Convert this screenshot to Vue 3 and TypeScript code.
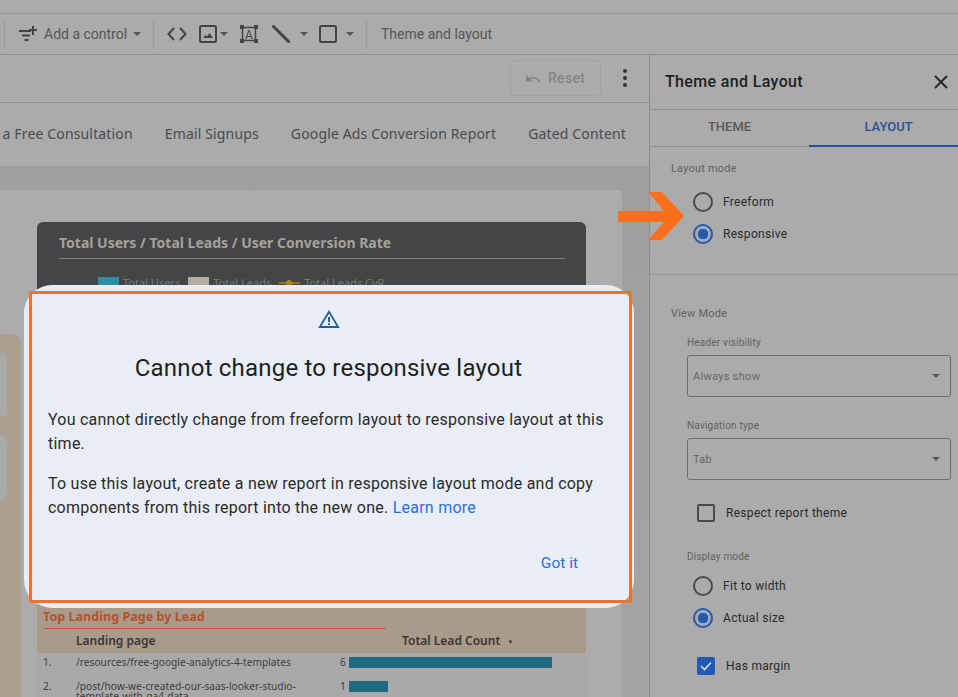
<script setup lang="ts">
const reportTabs = ['Book a Free Consultation', 'Email Signups', 'Google Ads Conversion Report', 'Gated Content']

interface LegendItem {
  label: string
  kind: string
}

const legend: LegendItem[] = [
  { label: 'Total Users', kind: 'teal' },
  { label: 'Total Leads', kind: 'sand' },
  { label: 'Total Leads CvR', kind: 'line' }
]

const rows = [
  { n: '1.', page: '/resources/free-google-analytics-4-templates', count: 6, width: 203 },
  { n: '2.', page: '/post/how-we-created-our-saas-looker-studio-template-with-ga4-data', count: 1, width: 39 }
]
</script>

<template>
  <div class="app">
    <div class="top-strip"></div>

    <div class="toolbar">
      <span class="sep first"></span>
      <svg class="ic add" width="20" height="20" viewBox="0 0 20 20">
        <path d="M1 7h12M4 11.500h8M6.500 16h4M15 2v9M11 6h8" />
      </svg>
      <span class="tool-text control">Add a control</span>
      <span class="caret c1"></span>
      <span class="sep s2"></span>
      <svg class="ic code" width="20" height="16" viewBox="0 0 20 16">
        <path d="M7 2 1.500 8 7 14M13 2l5.500 6L13 14" />
      </svg>
      <svg class="ic image" width="18" height="18" viewBox="0 0 18 18">
        <rect x="1" y="1" width="16" height="16" rx="1.500" />
        <path class="fill" d="M4 13l2.500-3 1.500 1.500L10.500 8 14 13z" />
      </svg>
      <span class="caret c2"></span>
      <svg class="ic textbox" width="18" height="18" viewBox="0 0 18 18">
        <path class="thin" d="M2.500 2.500h13v13h-13z" />
        <path class="corner" d="M0 0h4v4H0zM14 0h4v4h-4zM0 14h4v4H0zM14 14h4v4h-4z" />
        <text x="9" y="13.500" text-anchor="middle">A</text>
      </svg>
      <svg class="ic line" width="18" height="18" viewBox="0 0 18 18">
        <path d="M1.500 1.500l15 15" />
      </svg>
      <span class="caret c3"></span>
      <svg class="ic square" width="18" height="18" viewBox="0 0 18 18">
        <rect x="1" y="1" width="16" height="16" rx="1.500" />
      </svg>
      <span class="caret c4"></span>
      <span class="sep s3"></span>
      <span class="tool-text theme">Theme and layout</span>
    </div>

    <div class="workspace">
      <div class="main">
        <div class="report-head">
          <button class="reset" type="button">
            <svg width="16" height="12" viewBox="0 0 16 12">
              <path d="M15 10.500C13.500 6.500 9 4.500 4.500 6.500" />
              <path class="solid" d="M1 2.500v7h7z" />
            </svg>
            <span>Reset</span>
          </button>
          <span class="kebab"><i></i><i></i><i></i></span>
        </div>

        <div class="report-tabs">
          <span v-for="tab in reportTabs" :key="tab">{{ tab }}</span>
        </div>

        <div class="canvas">
          <div class="report-page">
            <div class="side-col">
              <div class="side-card"></div>
              <div class="side-card"></div>
            </div>
            <div class="content-col">
              <div class="chart-card">
                <div class="chart-title">Total Users / Total Leads / User Conversion Rate</div>
                <div class="legend">
                  <span v-for="item in legend" :key="item.label" class="legend-item">
                    <i :class="item.kind"></i>{{ item.label }}
                  </span>
                </div>
              </div>
              <div class="table-card">
                <div class="table-title"><span>Top Landing Page by Lead</span></div>
                <div class="table-head">
                  <span class="col-page">Landing page</span>
                  <span class="col-count">Total Lead Count <small>▼</small></span>
                </div>
                <div v-for="row in rows" :key="row.n" class="table-row">
                  <span class="row-n">{{ row.n }}</span>
                  <span class="row-page">{{ row.page }}</span>
                  <span class="row-count">{{ row.count }}</span>
                  <span class="row-bar" :style="{ width: row.width + 'px' }"></span>
                </div>
              </div>
            </div>
          </div>
        </div>
      </div>

      <aside class="panel">
        <div class="panel-head">
          <span>Theme and Layout</span>
          <svg width="14" height="14" viewBox="0 0 14 14"><path d="M1 1l12 12M13 1 1 13" /></svg>
        </div>
        <div class="panel-tabs">
          <span class="tab">THEME</span>
          <span class="tab active">LAYOUT</span>
        </div>

        <section class="layout-mode">
          <div class="section-label">Layout mode</div>
          <label class="radio"><i></i>Freeform</label>
          <label class="radio on"><i></i>Responsive</label>
        </section>

        <section class="view-mode">
          <div class="section-label">View Mode</div>
          <div class="sub">
            <div class="field-label">Header visibility</div>
            <div class="select">Always show<span class="caret"></span></div>
            <div class="field-label nav">Navigation type</div>
            <div class="select">Tab<span class="caret"></span></div>
            <label class="check respect"><i></i>Respect report theme</label>
            <div class="field-label display">Display mode</div>
            <label class="radio"><i></i>Fit to width</label>
            <label class="radio on"><i></i>Actual size</label>
            <label class="check on margin">
              <i><svg width="12" height="10" viewBox="0 0 12 10"><path d="M1 5l3.500 3.500L11 1.500" /></svg></i>
              Has margin
            </label>
          </div>
        </section>
      </aside>
    </div>

    <div class="dialog">
      <div class="highlight">
        <svg class="warn" width="22" height="18" viewBox="0 0 22 18">
          <path d="M11 1.800 1.800 17h18.400z" />
          <path class="mark" d="M11 7v5M11 13.300v1.700" />
        </svg>
        <h2>Cannot change to responsive layout</h2>
        <p>You cannot directly change from freeform layout to responsive layout at this time.</p>
        <p>To use this layout, create a new report in responsive layout mode and copy components from this report into the new one. <a>Learn more</a></p>
        <div class="actions"><a>Got it</a></div>
      </div>
    </div>

    <svg class="arrow" width="68" height="50" viewBox="0 0 68 50">
      <path d="M30 0h14l22 24-22 24H30l16-18H0V19h46z" />
    </svg>
  </div>
</template>

<style scoped>
.app {
  position: relative;
  width: 958px;
  height: 697px;
  overflow: hidden;
  background: #ababab;
  color: #444;
  font-family: Roboto, "Liberation Sans", sans-serif;
}

.top-strip {
  height: 13px;
  border-bottom: 1px solid #969696;
}

/* toolbar */
.toolbar {
  display: flex;
  align-items: center;
  height: 40px;
  border-bottom: 1px solid #8f8f8f;
}
.sep {
  width: 1px;
  height: 30px;
  background: #9a9a9a;
}
.sep.first { margin-left: 4px; }
.sep.s2 { margin-left: 12px; }
.sep.s3 { margin-left: 12px; }
.ic {
  flex: none;
  fill: none;
  stroke: #444;
  stroke-width: 2;
}
.ic .fill { fill: #444; stroke: none; }
.ic.add { margin-left: 13px; }
.ic.code { margin-left: 13px; }
.ic.image { margin-left: 12px; }
.ic.textbox { margin-left: 12px; }
.ic.line { margin-left: 14px; }
.ic.line path { stroke-width: 3; stroke-linecap: round; }
.ic.square { margin-left: 11px; }
.ic.textbox .thin { stroke-width: 1.500; }
.ic.textbox .corner { fill: #444; stroke: none; }
.ic.textbox text {
  fill: #444;
  stroke: none;
  font-size: 12px;
  font-family: Roboto, sans-serif;
}
.tool-text {
  font-size: 14px;
  color: #555;
  white-space: nowrap;
}
.tool-text.control { margin-left: 6px; width: 84px; }
.tool-text.theme { margin-left: 14px; }
.caret {
  flex: none;
  width: 0;
  height: 0;
  border-left: 4px solid transparent;
  border-right: 4px solid transparent;
  border-top: 4px solid #555;
}
.caret.c1 { margin-left: 5px; }
.caret.c2 { margin-left: 3px; }
.caret.c3 { margin-left: 10px; }
.caret.c4 { margin-left: 9px; }

/* main area */
.workspace {
  display: flex;
  height: 643px;
}
.main {
  width: 649px;
  flex: none;
}
.report-head {
  display: flex;
  align-items: center;
  justify-content: flex-end;
  height: 48px;
  padding-bottom: 1px;
  box-sizing: border-box;
  border-bottom: 1px solid #8f8f8f;
}
.reset {
  display: flex;
  align-items: center;
  gap: 7px;
  width: 91px;
  height: 36px;
  padding: 0 0 0 14px;
  margin-right: 22px;
  background: #ababab;
  border: 1px solid #a1a1a1;
  border-radius: 4px;
  color: #868686;
  font: 500 14px Roboto, sans-serif;
  letter-spacing: 0.3px;
}
.reset svg { fill: none; stroke: #868686; stroke-width: 1.800; }
.reset .solid { fill: #868686; stroke: none; }
.kebab {
  display: flex;
  flex-direction: column;
  gap: 3px;
  margin-right: 22px;
}
.kebab i {
  width: 4px;
  height: 4px;
  border-radius: 50%;
  background: #333;
}
.report-tabs {
  display: flex;
  justify-content: flex-end;
  align-items: center;
  gap: 32px;
  height: 64px;
  padding-right: 23px;
  padding-bottom: 2px;
  box-sizing: border-box;
  border-bottom: 1px solid #9a9a9a;
  font: 14px "Noto Sans", sans-serif;
  letter-spacing: 0.15px;
  color: #4a4a4a;
  white-space: nowrap;
}
.canvas {
  height: 532px;
  padding-top: 23px;
  box-sizing: border-box;
  background: linear-gradient(#9f9f9f, #a4a4a4);
  overflow: hidden;
}
.report-page {
  display: flex;
  width: 622px;
  height: 507px;
  background: #acacac;
}
.side-col {
  flex: none;
  width: 21px;
  height: 400px;
  margin-top: 144px;
  padding-top: 18px;
  box-sizing: border-box;
  background: #ad9f8f;
  border-top-right-radius: 10px;
}
.side-card {
  width: 7px;
  height: 65px;
  margin-bottom: 18px;
  background: #a9a9a9;
  border-radius: 0 6px 6px 0;
}
.content-col {
  margin: 32px 0 0 16px;
  width: 549px;
}
.chart-card {
  height: 380px;
  padding: 11px 21px 0 22px;
  box-sizing: border-box;
  background: #434546;
  border-radius: 6px 6px 0 0;
}
.chart-title {
  height: 25px;
  border-bottom: 1px solid #7d7d7b;
  font: 700 14px "Noto Sans", sans-serif;
  color: #a5a297;
}
.legend {
  display: flex;
  gap: 8px;
  margin: 16px 0 0 39px;
  font: 11px "Noto Sans", sans-serif;
  color: #77797a;
}
.legend-item {
  display: flex;
  align-items: center;
  gap: 4px;
}
.legend-item i {
  display: block;
  width: 21px;
  height: 12px;
}
.legend-item .teal { background: #2a8fa5; }
.legend-item .sand { background: #b3aca0; }
.legend-item .line {
  position: relative;
  height: 2px;
  background: #9c7415;
}
.legend-item .line::after {
  content: '';
  position: absolute;
  left: 7px;
  top: -2px;
  width: 6px;
  height: 6px;
  border-radius: 50%;
  background: #b0821a;
}
.table-card {
  background: #a9a9a9;
  font-family: "Noto Sans", sans-serif;
}
.table-title {
  height: 41px;
  padding: 6px 201px 0 6px;
  box-sizing: border-box;
  background: #a99b8c;
  font-weight: 700;
  font-size: 12.600px;
  line-height: 17px;
  color: #b8512a;
}
.table-title span {
  display: block;
  margin-left: 1px;
  margin-right: -1px;
  text-indent: -1px;
  padding-bottom: 3px;
  border-bottom: 1px solid #c9582a;
}
.table-head {
  display: flex;
  margin-top: -12px;
  height: 22px;
  padding-bottom: 4px;
  box-sizing: border-box;
  align-items: center;
  background: #a99b8c;
  font-size: 12px;
  font-weight: 600;
  color: #3a3632;
}
.col-page { margin-left: 39px; width: 326px; }
.col-count small { font-size: 6px; margin-left: 4px; vertical-align: 1px; }
.table-row {
  display: flex;
  align-items: flex-start;
  height: 24px;
  padding-top: 1px;
  box-sizing: border-box;
  font-size: 10.200px;
  line-height: 10px;
  color: #3d3d3d;
}
.row-n { margin-left: 6px; width: 33px; padding-top: 3px; }
.row-page { width: 264px; padding: 3px 24px 0 0; box-sizing: border-box; }
.row-count { width: 9px; padding-top: 3px; }
.row-bar {
  height: 11px;
  margin-top: 3px;
  background: #1f6a83;
}

/* theme panel */
.panel {
  flex: 1;
  min-width: 0;
  overflow: hidden;
  border-left: 1px solid #8f8f8f;
  color: #222;
}
.panel-head {
  display: flex;
  justify-content: space-between;
  align-items: center;
  height: 55px;
  padding: 0 10px 2px 15px;
  box-sizing: border-box;
  border-bottom: 1px solid #8f8f8f;
  font-size: 16px;
  font-weight: 500;
  color: #1f1f1f;
  letter-spacing: 0.35px;
}
.panel-head svg { fill: none; stroke: #2a2a2a; stroke-width: 2; margin-top: 2px; }
.panel-tabs {
  display: flex;
  width: 318px;
  height: 37px;
  box-sizing: border-box;
  border-bottom: 1px solid #8f8f8f;
}
.tab {
  flex: 1;
  display: flex;
  align-items: center;
  justify-content: center;
  padding-bottom: 3px;
  font-size: 13px;
  font-weight: 500;
  color: #595959;
}
.tab.active {
  color: #2d4f93;
  box-shadow: 0 1px 0 0 #2450a4, inset 0 -1px 0 0 #2450a4;
}
.layout-mode {
  height: 128px;
  padding: 15px 0 0 21px;
  box-sizing: border-box;
  border-bottom: 1px solid #979797;
}
.section-label {
  font-size: 11px;
  line-height: 14px;
  color: #616161;
  letter-spacing: 0.2px;
}
.radio {
  display: flex;
  align-items: center;
  gap: 10px;
  height: 32px;
  margin-left: 22px;
  font-size: 12px;
  letter-spacing: 0.3px;
  color: #2a2a2a;
}
.layout-mode .section-label { margin-bottom: 10px; }
.radio i {
  display: block;
  flex: none;
  width: 20px;
  height: 20px;
  box-sizing: border-box;
  border: 2px solid #4a4a4a;
  border-radius: 50%;
  background: #ababab;
}
.radio.on i {
  border-color: #2159b5;
  background: radial-gradient(circle, #2159b5 0 5px, #ababab 5.500px);
}
.view-mode {
  padding: 32px 0 0 21px;
}
.sub {
  margin: 16px 7px 0 16px;
}
.sub .radio { margin-left: 6px; }
.field-label {
  font-size: 10px;
  line-height: 12px;
  color: #616161;
  letter-spacing: 0.2px;
}
.field-label.nav { margin-top: 23px; }
.field-label.display { margin-top: 29px; }
.select {
  display: flex;
  align-items: center;
  justify-content: space-between;
  height: 42px;
  margin-top: 6px;
  padding: 0 10px 0 5px;
  box-sizing: border-box;
  border: 1px solid #6d6d6d;
  border-radius: 3px;
  font-size: 11px;
  letter-spacing: 0.3px;
  color: #666;
}
.check {
  display: flex;
  align-items: center;
  gap: 11px;
  margin-left: 10px;
  font-size: 12px;
  letter-spacing: 0.3px;
  color: #2a2a2a;
}
.check i {
  display: flex;
  align-items: center;
  justify-content: center;
  flex: none;
  width: 18px;
  height: 18px;
  box-sizing: border-box;
  border: 2px solid #4a4a4a;
  border-radius: 2px;
}
.check.respect { margin-top: 24px; }
.check.margin { margin-top: 23px; }
.check.on i { background: #2159b5; border-color: #2159b5; }
.check svg { fill: none; stroke: #d9dde3; stroke-width: 1.600; }
.display + .radio { margin-top: 7px; }

/* dialog on top */
.dialog {
  position: absolute;
  left: 24px;
  top: 285px;
  width: 610px;
  height: 323px;
  padding: 6px 2px 5px 5px;
  box-sizing: border-box;
  background: #e9eef6;
  border-radius: 28px;
}
.highlight {
  display: flex;
  flex-direction: column;
  height: 100%;
  padding: 16px 20px 0 16px;
  box-sizing: border-box;
  border: 3px solid #f4712c;
  border-radius: 2px;
  color: #1f1f1f;
}
.warn {
  align-self: center;
  fill: none;
  stroke: #205f96;
  stroke-width: 1.800;
  flex: none;
}
.warn .mark { stroke-width: 2; }
h2 {
  margin: 24px 0 24px;
  text-align: center;
  font-size: 24px;
  line-height: 32px;
  font-weight: 400;
  letter-spacing: 0.2px;
}
p {
  margin: 0 0 16px;
  font-size: 16px;
  line-height: 24px;
  letter-spacing: 0.24px;
  color: #2b2b2b;
}
a { color: #2a6fdb; }
.actions {
  display: flex;
  justify-content: flex-end;
  margin-top: 18px;
  padding-right: 31px;
  font-size: 15.500px;
  font-weight: 400;
}
.arrow {
  position: absolute;
  left: 618px;
  top: 192px;
  fill: #f96f1b;
}
</style>
